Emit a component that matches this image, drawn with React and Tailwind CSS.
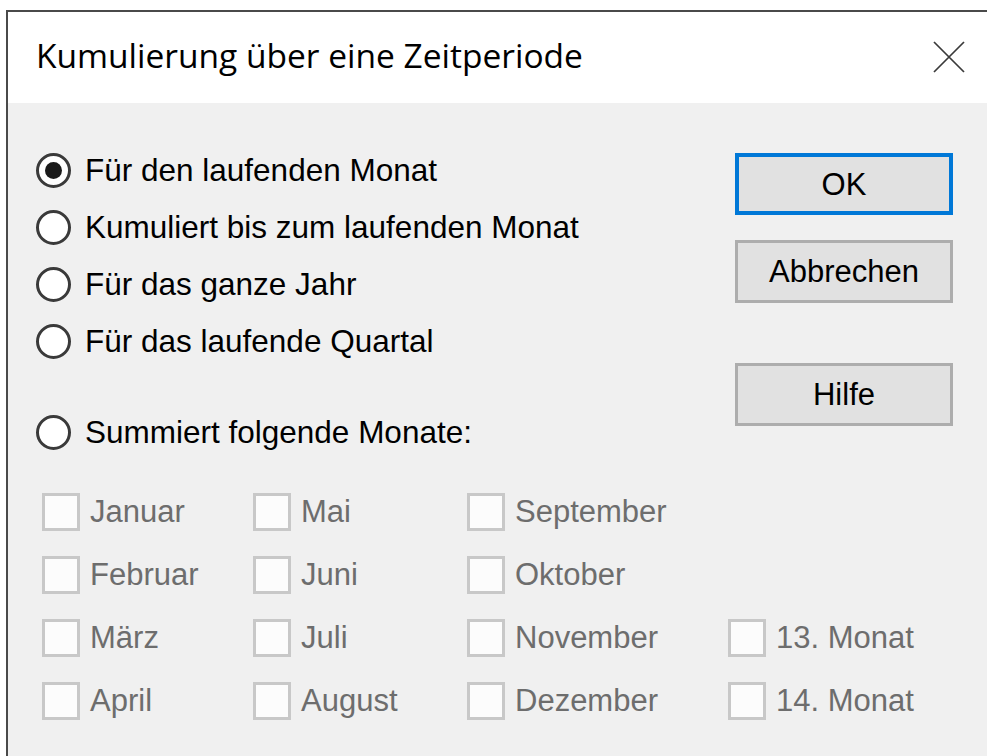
import React from "react";

const sans = { fontFamily: '"Liberation Sans", Arial, sans-serif' };

function Radio({ checked, label }) {
  return (
    <div className="flex h-[57px] items-center">
      <span className="flex h-[35px] w-[35px] shrink-0 items-center justify-center rounded-full border-[3px] border-[#3a3a3a] bg-white">
        {checked && <span className="block h-[17px] w-[17px] rounded-full bg-[#1a1a1a]" />}
      </span>
      <span className="ml-[14px] text-[31.5px] leading-none text-black">{label}</span>
    </div>
  );
}

function Check({ label }) {
  return (
    <div className="flex h-[63px] items-center">
      <span className="block h-[38px] w-[38px] shrink-0 border-[3px] border-[#c8c8c8] bg-[#fcfcfc]" />
      <span className="ml-[10px] text-[31px] leading-none text-[#6d6d6d]">{label}</span>
    </div>
  );
}

function Button({ label, focused, className = "" }) {
  return (
    <div
      className={
        "flex items-center justify-center bg-[#e1e1e1] text-[31px] leading-none text-black " +
        (focused ? "border-[4px] border-[#0078d7] " : "border-[3px] border-[#adadad] ") +
        className
      }
    >
      {label}
    </div>
  );
}

const months = [
  ["Januar", "Mai", "September", null],
  ["Februar", "Juni", "Oktober", null],
  ["März", "Juli", "November", "13. Monat"],
  ["April", "August", "Dezember", "14. Monat"],
];

export default function App() {
  return (
    <div className="h-[756px] w-[987px] overflow-hidden bg-white" style={sans}>
      <div className="ml-[6px] mt-[10px] flex h-[746px] flex-col border-l-2 border-t-2 border-[#4a4a4a] bg-[#f0f0f0]">
        {/* title bar */}
        <div className="flex h-[91px] shrink-0 items-center justify-between bg-white pl-[28px] pr-[22px]">
          <span
            className="mt-[-3px] text-[33.5px] leading-none text-black"
            style={{ fontFamily: '"Open Sans", "Noto Sans", sans-serif' }}
          >
            Kumulierung über eine Zeitperiode
          </span>
          <svg width="32" height="32" viewBox="0 0 32 32" className="mt-[-2px]">
            <path d="M1 1 L31 31 M31 1 L1 31" stroke="#3a3a3a" strokeWidth="1.75" fill="none" />
          </svg>
        </div>

        {/* body */}
        <div className="flex flex-1 flex-col pl-[28px] pt-[39px]">
          <div className="flex">
            <div className="flex flex-1 flex-col">
              <Radio checked label="Für den laufenden Monat" />
              <Radio label="Kumuliert bis zum laufenden Monat" />
              <Radio label="Für das ganze Jahr" />
              <Radio label="Für das laufende Quartal" />
              <div className="mt-[34px]">
                <Radio label="Summiert folgende Monate:" />
              </div>
            </div>
            <div className="mr-[34px] flex w-[218px] flex-col pt-[11px]">
              <Button focused label="OK" className="h-[62px]" />
              <Button label="Abbrechen" className="mt-[25px] h-[63px]" />
              <Button label="Hilfe" className="mt-[60px] h-[63px]" />
            </div>
          </div>

          <div className="ml-[6px] mt-[19px] grid grid-cols-[211px_214px_261px_auto]">
            {months.flat().map((m, i) =>
              m ? <Check key={i} label={m} /> : <div key={i} />
            )}
          </div>
        </div>
      </div>
    </div>
  );
}
